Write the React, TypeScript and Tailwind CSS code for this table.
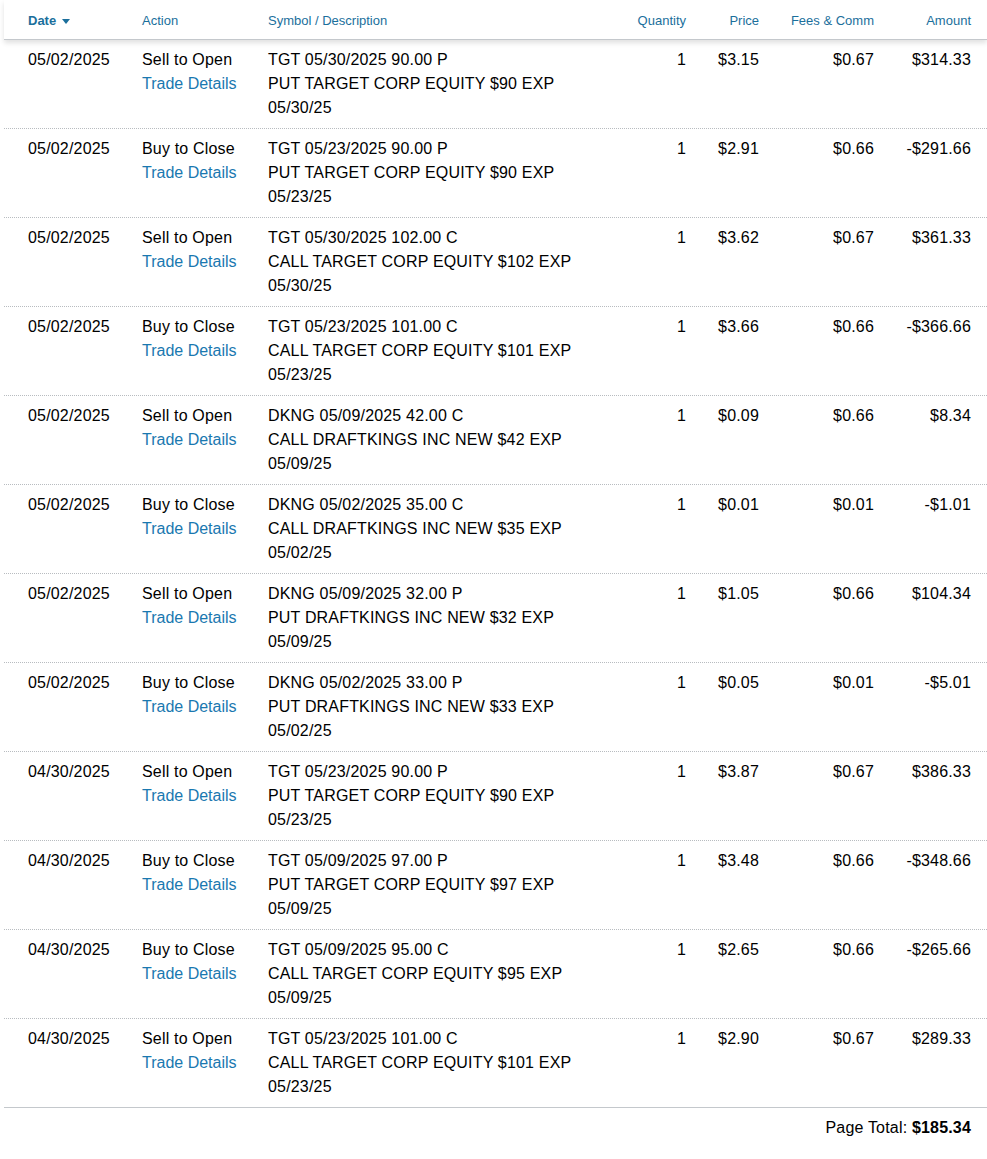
import React from "react";

type Row = {
  date: string;
  action: string;
  sym: string;
  desc: string;
  exp: string;
  qty: string;
  price: string;
  fees: string;
  amount: string;
};

const rows: Row[] = [
  { date: "05/02/2025", action: "Sell to Open", sym: "TGT 05/30/2025 90.00 P", desc: "PUT TARGET CORP EQUITY $90 EXP", exp: "05/30/25", qty: "1", price: "$3.15", fees: "$0.67", amount: "$314.33" },
  { date: "05/02/2025", action: "Buy to Close", sym: "TGT 05/23/2025 90.00 P", desc: "PUT TARGET CORP EQUITY $90 EXP", exp: "05/23/25", qty: "1", price: "$2.91", fees: "$0.66", amount: "-$291.66" },
  { date: "05/02/2025", action: "Sell to Open", sym: "TGT 05/30/2025 102.00 C", desc: "CALL TARGET CORP EQUITY $102 EXP", exp: "05/30/25", qty: "1", price: "$3.62", fees: "$0.67", amount: "$361.33" },
  { date: "05/02/2025", action: "Buy to Close", sym: "TGT 05/23/2025 101.00 C", desc: "CALL TARGET CORP EQUITY $101 EXP", exp: "05/23/25", qty: "1", price: "$3.66", fees: "$0.66", amount: "-$366.66" },
  { date: "05/02/2025", action: "Sell to Open", sym: "DKNG 05/09/2025 42.00 C", desc: "CALL DRAFTKINGS INC NEW $42 EXP", exp: "05/09/25", qty: "1", price: "$0.09", fees: "$0.66", amount: "$8.34" },
  { date: "05/02/2025", action: "Buy to Close", sym: "DKNG 05/02/2025 35.00 C", desc: "CALL DRAFTKINGS INC NEW $35 EXP", exp: "05/02/25", qty: "1", price: "$0.01", fees: "$0.01", amount: "-$1.01" },
  { date: "05/02/2025", action: "Sell to Open", sym: "DKNG 05/09/2025 32.00 P", desc: "PUT DRAFTKINGS INC NEW $32 EXP", exp: "05/09/25", qty: "1", price: "$1.05", fees: "$0.66", amount: "$104.34" },
  { date: "05/02/2025", action: "Buy to Close", sym: "DKNG 05/02/2025 33.00 P", desc: "PUT DRAFTKINGS INC NEW $33 EXP", exp: "05/02/25", qty: "1", price: "$0.05", fees: "$0.01", amount: "-$5.01" },
  { date: "04/30/2025", action: "Sell to Open", sym: "TGT 05/23/2025 90.00 P", desc: "PUT TARGET CORP EQUITY $90 EXP", exp: "05/23/25", qty: "1", price: "$3.87", fees: "$0.67", amount: "$386.33" },
  { date: "04/30/2025", action: "Buy to Close", sym: "TGT 05/09/2025 97.00 P", desc: "PUT TARGET CORP EQUITY $97 EXP", exp: "05/09/25", qty: "1", price: "$3.48", fees: "$0.66", amount: "-$348.66" },
  { date: "04/30/2025", action: "Buy to Close", sym: "TGT 05/09/2025 95.00 C", desc: "CALL TARGET CORP EQUITY $95 EXP", exp: "05/09/25", qty: "1", price: "$2.65", fees: "$0.66", amount: "-$265.66" },
  { date: "04/30/2025", action: "Sell to Open", sym: "TGT 05/23/2025 101.00 C", desc: "CALL TARGET CORP EQUITY $101 EXP", exp: "05/23/25", qty: "1", price: "$2.90", fees: "$0.67", amount: "$289.33" },
];

const cols = "grid grid-cols-[114px_126px_332px_86px_73px_115px_97px] pl-[24px] pr-[16px]";

export default function App() {
  return (
    <div className="bg-white w-[987px] min-h-[1159px] pl-[4px] font-['Liberation_Sans',Arial,sans-serif] text-[#000]">
      <div className={`${cols} h-[40px] pt-[2px] items-center text-[13px] text-[#1b6f9c] border-b border-[#c4c8cc] shadow-[0_3px_5px_rgba(0,0,0,0.12)] relative`}>
        <div className="font-bold flex items-center gap-[6px]">
          Date
          <svg width="8" height="5" viewBox="0 0 8 5" className="mt-[1px]"><path d="M0 0h8L4 5z" fill="#1b6f9c" /></svg>
        </div>
        <div>Action</div>
        <div>Symbol / Description</div>
        <div className="text-right">Quantity</div>
        <div className="text-right">Price</div>
        <div className="text-right">Fees &amp; Comm</div>
        <div className="text-right">Amount</div>
      </div>
      {rows.map((r, i) => (
        <div
          key={i}
          className={`${cols} pt-[8px] pb-[8px] text-[16px] leading-[24px] tracking-[0.18px] ${i < rows.length - 1 ? "border-b border-dotted border-[#b8bcc0]" : "border-b border-[#c4c8cc]"}`}
        >
          <div>{r.date}</div>
          <div>
            <div>{r.action}</div>
            <div className="text-[#1a78b0] tracking-normal">Trade Details</div>
          </div>
          <div>
            <div>{r.sym}</div>
            <div>{r.desc}</div>
            <div>{r.exp}</div>
          </div>
          <div className="text-right">{r.qty}</div>
          <div className="text-right">{r.price}</div>
          <div className="text-right">{r.fees}</div>
          <div className="text-right">{r.amount}</div>
        </div>
      ))}
      <div className="flex justify-end pr-[16px] pt-[8px] text-[16px] leading-[24px] tracking-[0.18px]">
        <span>
          Page Total: <span className="font-bold">$185.34</span>
        </span>
      </div>
    </div>
  );
}
